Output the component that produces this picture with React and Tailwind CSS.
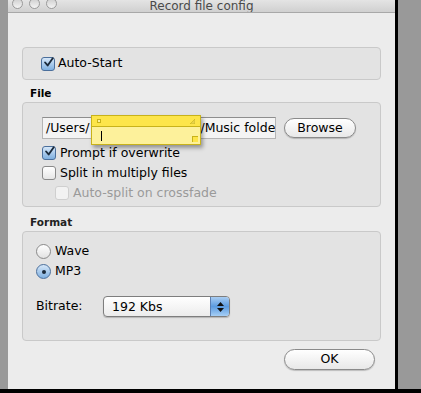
import React from "react";

const font = { fontFamily: '"DejaVu Sans", "Liberation Sans", sans-serif' };

const Check = ({ checked, disabled }) => (
  <span
    className={`inline-flex items-center justify-center w-[14px] h-[14px] rounded-[3px] border shrink-0 ${
      checked
        ? "border-[#4b6f9c] bg-gradient-to-b from-[#d6e7f8] to-[#7fb0e0]"
        : disabled
        ? "border-[#cfcfcf] bg-[#f2f2f2]"
        : "border-[#8a8a8a] bg-gradient-to-b from-white to-[#e6e6e6]"
    }`}
  >
    {checked && (
      <svg width="13" height="13" viewBox="0 0 13 13" className="-mt-[3px] ml-[1px]">
        <path d="M2.5 6.5 L5.5 10 L11.5 1.5" fill="none" stroke="#1b2a3a" strokeWidth="2.2" strokeLinecap="round" strokeLinejoin="round" />
      </svg>
    )}
  </span>
);

const Radio = ({ on }) => (
  <span
    className={`inline-flex items-center justify-center w-[15px] h-[15px] rounded-full border shrink-0 ${
      on ? "border-[#4b6f9c] bg-gradient-to-b from-[#d6e7f8] to-[#7fb0e0]" : "border-[#8a8a8a] bg-gradient-to-b from-white to-[#e2e2e2]"
    }`}
  >
    {on && <span className="w-[4px] h-[4px] rounded-full bg-[#1b2a3a]" />}
  </span>
);

const Group = ({ className, children }) => (
  <div className={`mx-[14px] rounded-[4px] border border-[#c9c9c9] bg-[#e3e3e3] ${className}`}>{children}</div>
);

export default function App() {
  return (
    <div className="w-[421px] h-[393px] bg-[#999999] flex flex-col overflow-hidden text-[12px] text-black" style={font}>
      <div className="flex flex-1">
        <div className="w-[8px]" />
        <div className="w-[387px] bg-[#ececec] flex flex-col relative">
          <div className="h-[13px] border-b border-[#a8a8a8] bg-gradient-to-b from-[#e4e4e4] to-[#d0d0d0] flex items-start relative overflow-hidden">
            <div className="flex gap-[6px] pl-[4px] -mt-[2px]">
              {[0, 1, 2].map((i) => (
                <span key={i} className="w-[11px] h-[11px] rounded-full border border-[#9a9a9a] bg-gradient-to-b from-[#cfcfcf] to-[#f4f4f4]" />
              ))}
            </div>
            <div className="absolute inset-x-0 -top-[3px] text-center text-[12px] text-[#4a4a4a]">Record file config</div>
          </div>

          <Group className="mt-[34px] h-[33px] flex items-center pl-[18px] gap-[3px]">
            <Check checked />
            <span className="text-[12.5px]">Auto-Start</span>
          </Group>

          <div className="mt-[6px] pl-[22px] text-[10.5px] font-bold h-[14px] leading-[14px]">File</div>
          <Group className="mt-[2px] h-[105px] pt-[14px] pl-[19px] relative">
            <div className="flex items-center">
              <div className="w-[234px] h-[22px] bg-[#f4f4f4] border border-[#b5b5b5] border-t-[#8e8e8e] flex items-center pl-[3px] whitespace-nowrap overflow-hidden text-[12.5px]">
                <span>/Users/</span>
                <span className="ml-[111px]">/Music folder</span>
              </div>
              <button className="ml-[8px] w-[72px] h-[20px] rounded-full border border-[#8a8a8a] bg-gradient-to-b from-white to-[#e8e8e8] text-[12.5px] shadow-[0_1px_1px_rgba(0,0,0,0.2)]">
                Browse
              </button>
            </div>
            <div className="flex items-center gap-[4px] mt-[7px] h-[14px]">
              <Check checked />
              <span className="text-[12.5px]">Prompt if overwrite</span>
            </div>
            <div className="flex items-center gap-[4px] mt-[6px] h-[14px]">
              <Check />
              <span className="text-[12.5px]">Split in multiply files</span>
            </div>
            <div className="flex items-center gap-[4px] mt-[6px] h-[14px] pl-[13px]">
              <Check disabled />
              <span className="text-[12.5px] text-[#9a9a9a]">Auto-split on crossfade</span>
            </div>

            <div className="absolute left-[68px] top-[12px] w-[110px] h-[30px] border border-[#c8b21a] bg-[#fdf19b] shadow-[2px_3px_4px_rgba(0,0,0,0.35)]">
              <div className="h-[11px] bg-[#fde54a] border-b border-[#c8b21a] flex justify-between items-center px-[5px]">
                <span className="w-[4px] h-[4px] border border-[#c8b21a] bg-[#fdf19b]" />
                <svg width="5" height="5" viewBox="0 0 5 5"><path d="M0 5 L5 0 L5 5 Z" fill="#e8d34a" stroke="#c8b21a" strokeWidth="0.6" /></svg>
              </div>
              <div className="relative h-[17px] pl-[9px] flex items-center">
                <span className="w-[1px] h-[10px] bg-black" />
                <span className="absolute right-[2px] bottom-[2px] w-[6px] h-[6px] border-l border-t border-[#c8b21a] bg-[#fde54a]" />
              </div>
            </div>
          </Group>

          <div className="mt-[8px] pl-[22px] text-[10.5px] font-bold h-[14px] leading-[14px] text-[#222]">Format</div>
          <Group className="mt-[2px] h-[110px] pt-[12px] pl-[13px]">
            <div className="flex items-center gap-[4px] h-[15px]">
              <Radio />
              <span className="text-[12.5px]">Wave</span>
            </div>
            <div className="flex items-center gap-[4px] h-[15px] mt-[5px]">
              <Radio on />
              <span className="text-[12.5px]">MP3</span>
            </div>
            <div className="flex items-center mt-[17px]">
              <span className="w-[67px] text-[12.5px]">Bitrate:</span>
              <div className="w-[127px] h-[21px] rounded-[4px] border border-[#7e7e7e] bg-gradient-to-b from-white to-[#ececec] flex overflow-hidden shadow-[0_1px_1px_rgba(0,0,0,0.2)]">
                <span className="flex-1 pl-[8px] text-[12.5px] leading-[19px]">192 Kbs</span>
                <span className="w-[19px] border-l border-[#5b7fb2] bg-gradient-to-b from-[#a9cdf2] via-[#5b9be0] to-[#a6cff5] flex flex-col items-center justify-center gap-[2px]">
                  <svg width="7" height="4" viewBox="0 0 7 4"><path d="M0 4 L3.5 0 L7 4 Z" fill="#111" /></svg>
                  <svg width="7" height="4" viewBox="0 0 7 4"><path d="M0 0 L3.5 4 L7 0 Z" fill="#111" /></svg>
                </span>
              </div>
            </div>
          </Group>

          <div className="flex justify-end pr-[20px] mt-[8px]">
            <button className="w-[91px] h-[21px] rounded-full border border-[#8a8a8a] bg-gradient-to-b from-white to-[#e8e8e8] text-[12.5px] shadow-[0_1px_1px_rgba(0,0,0,0.2)]">
              OK
            </button>
          </div>
        </div>
        <div className="w-[3px] bg-black" />
        <div className="flex-1" />
      </div>
      <div className="h-[4px] bg-black" />
    </div>
  );
}
